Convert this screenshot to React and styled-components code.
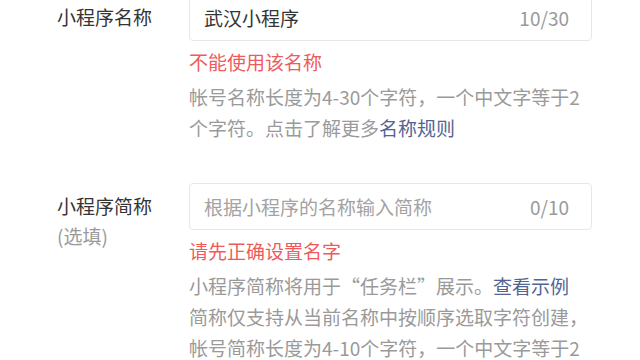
import React from "react";
import styled, { createGlobalStyle } from "styled-components";

const TEXT_COLOR = "#353535";
const HINT_COLOR = "#9a9a9a";
const ERROR_COLOR = "#f05a5c";
const LINK_COLOR = "#526494";

const GlobalStyle = createGlobalStyle`
  html, body {
    margin: 0;
    padding: 0;
    background: #fff;
    overflow: hidden;
  }
  body {
    font-family: "Noto Sans CJK SC", "Noto Sans", sans-serif;
    font-size: 19px;
    color: ${TEXT_COLOR};
  }
`;

const Form = styled.div`
  display: flex;
  flex-direction: column;
  gap: 40px;
  margin-top: -6px;
  padding-left: 57px;
`;

const Row = styled.div`
  display: flex;
  align-items: flex-start;
`;

const Label = styled.div`
  width: 132px;
  flex: none;
  padding-top: 8px;
  line-height: 30px;
  color: ${TEXT_COLOR};
`;

const Optional = styled.div`
  color: ${HINT_COLOR};
`;

const Field = styled.div`
  width: 403px;
  display: flex;
  flex-direction: column;
`;

const InputBox = styled.div`
  box-sizing: border-box;
  height: 47px;
  border: 1px solid #e7e7eb;
  border-radius: 4px;
  padding: 0 22px 0 14px;
  display: flex;
  align-items: center;
  justify-content: space-between;
`;

const Value = styled.span`
  color: ${(p) => (p.$placeholder ? "#a3a3a3" : TEXT_COLOR)};
`;

const Counter = styled.span`
  color: ${HINT_COLOR};
`;

const Error = styled.div`
  margin-top: 5px;
  line-height: 32px;
  color: ${ERROR_COLOR};
`;

const Hint = styled.div`
  margin-top: 3px;
  line-height: 31px;
  color: ${HINT_COLOR};
`;

const Link = styled.a`
  color: ${LINK_COLOR};
  text-decoration: none;
  cursor: pointer;
`;

function App() {
  return (
    <>
      <GlobalStyle />
      <Form>
        <Row>
          <Label>小程序名称</Label>
          <Field>
            <InputBox>
              <Value>武汉小程序</Value>
              <Counter>10/30</Counter>
            </InputBox>
            <Error>不能使用该名称</Error>
            <Hint>
              帐号名称长度为4-30个字符，一个中文字等于2个字符。点击了解更多
              <Link>名称规则</Link>
            </Hint>
          </Field>
        </Row>
        <Row>
          <Label>
            小程序简称
            <Optional>(选填)</Optional>
          </Label>
          <Field>
            <InputBox>
              <Value $placeholder>根据小程序的名称输入简称</Value>
              <Counter>0/10</Counter>
            </InputBox>
            <Error>请先正确设置名字</Error>
            <Hint>
              小程序简称将用于“任务栏”展示。<Link>查看示例</Link>
              <br />
              简称仅支持从当前名称中按顺序选取字符创建，
              <br />
              帐号简称长度为4-10个字符，一个中文字等于2个字符。
            </Hint>
          </Field>
        </Row>
      </Form>
    </>
  );
}

export default App;
